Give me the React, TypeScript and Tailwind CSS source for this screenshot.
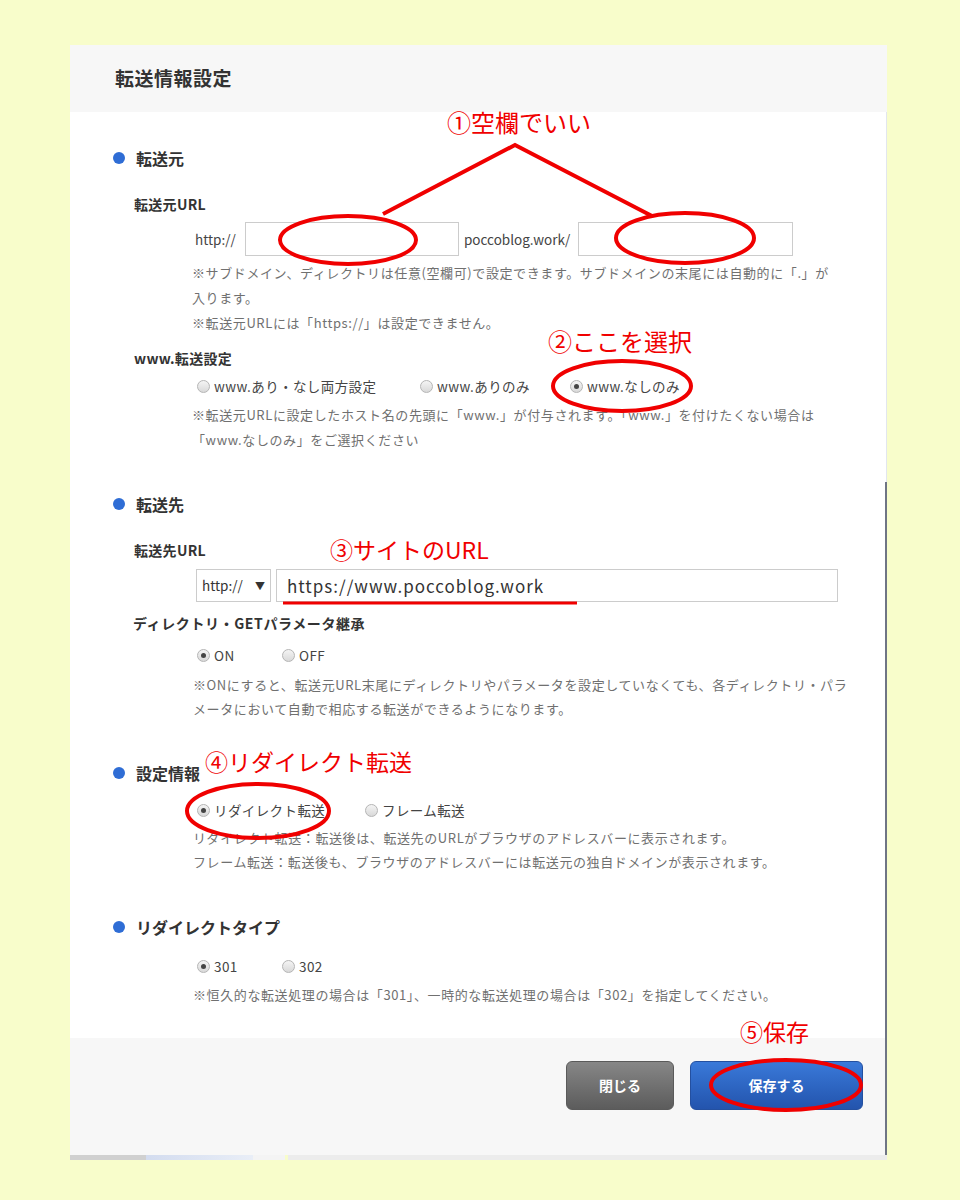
import React from "react";

const jp = { fontFamily: '"Noto Sans CJK JP", "Noto Sans", sans-serif' };

function Radio({ checked, label, className = "" }: { checked?: boolean; label: string; className?: string }) {
  return (
    <span className={`inline-flex items-center gap-[4px] ${className}`}>
      <span className="w-[13px] h-[13px] rounded-full border border-[#b5b5b5] bg-gradient-to-b from-[#f4f4f4] to-[#d9d9d9] flex items-center justify-center">
        {checked && <span className="w-[5px] h-[5px] rounded-full bg-[#444]" />}
      </span>
      <span className="text-[13.5px] tracking-[0.4px] text-[#444]">{label}</span>
    </span>
  );
}

function Heading({ children, className = "" }: { children: React.ReactNode; className?: string }) {
  return (
    <div className={`flex items-center gap-[11px] h-[20px] ${className}`}>
      <span className="w-[12px] h-[12px] rounded-full bg-[#2f6dd5]" />
      <span className="text-[16px] font-bold text-[#333]">{children}</span>
    </div>
  );
}

function Label({ children, className = "" }: { children: React.ReactNode; className?: string }) {
  return (
    <div className={`ml-[21px] h-[20px] leading-[20px] text-[14px] tracking-[0.3px] font-bold text-[#333] ${className}`}>
      {children}
    </div>
  );
}

function Note({ lines, lh, className = "" }: { lines: string[]; lh: string; className?: string }) {
  return (
    <div className={`text-[13px] tracking-[0.6px] text-[#707070] ${lh} ${className}`}>
      {lines.map((l) => (
        <div key={l}>{l}</div>
      ))}
    </div>
  );
}

export default function App() {
  return (
    <div className="relative w-[960px] h-[1200px] bg-[#f8fdcb] pt-[45px] pl-[70px]" style={jp}>
      <div className="w-[817px]">
        {/* header */}
        <div className="h-[67px] bg-[#f7f7f7] flex items-center pl-[45px]">
          <h1 className="text-[19px] tracking-[0.5px] font-bold text-[#333]">転送情報設定</h1>
        </div>

        {/* 転送元 */}
        <div className="bg-white pl-[43px] pt-[36px] h-[370px] border-r border-[#e2e6ee]">
          <Heading>転送元</Heading>
          <Label className="mt-[26px]">転送元URL</Label>
          <div className="mt-[8px] ml-[82px] flex items-center text-[13.5px] text-[#444]">
            <span className="w-[50px]">http://</span>
            <span className="w-[214px] h-[34px] border border-[#ccc] bg-white" />
            <span className="ml-[5px] w-[114px]">poccoblog.work/</span>
            <span className="w-[215px] h-[34px] border border-[#ccc] bg-white" />
          </div>
          <Note
            className="ml-[79px] mt-[4px]"
            lh="leading-[25px]"
            lines={[
              "※サブドメイン、ディレクトリは任意(空欄可)で設定できます。サブドメインの末尾には自動的に「.」が",
              "入ります。",
              "※転送元URLには「https://」は設定できません。",
            ]}
          />
          <Label className="mt-[13px]">www.転送設定</Label>
          <div className="mt-[8px] ml-[84px] flex items-center h-[20px]">
            <Radio label="www.あり・なし両方設定" className="w-[223px]" />
            <Radio label="www.ありのみ" className="w-[150px]" />
            <Radio checked label="www.なしのみ" />
          </div>
          <Note
            className="ml-[79px] mt-[6px]"
            lh="leading-[25px]"
            lines={[
              "※転送元URLに設定したホスト名の先頭に「www.」が付与されます。「www.」を付けたくない場合は",
              "「www.なしのみ」をご選択ください",
            ]}
          />
        </div>

        <div className="border-r-2 border-[#6f7585]">
          {/* 転送先 */}
          <div className="bg-white pl-[43px] pt-[12px]">
            <Heading>転送先</Heading>
            <Label className="mt-[26px]">転送先URL</Label>
            <div className="mt-[9px] ml-[83px] flex items-center gap-[5px]">
              <div className="w-[75px] h-[33px] border border-[#ccc] bg-white flex items-center justify-between px-[5px] text-[13.5px] text-[#333]">
                <span>http://</span>
                <span className="text-[10px]">▼</span>
              </div>
              <div className="w-[562px] h-[33px] border border-[#ccc] bg-white flex items-center pl-[10px] text-[17px] text-[#333] tracking-[1px]">
                https://www.poccoblog.work
              </div>
            </div>
            <div className="ml-[20px] mt-[11px] h-[20px] leading-[20px] text-[14px] tracking-[0.6px] font-bold text-[#333]">
              ディレクトリ・GETパラメータ継承
            </div>
            <div className="mt-[12px] ml-[84px] flex items-center h-[20px]">
              <Radio checked label="ON" className="w-[85px]" />
              <Radio label="OFF" />
            </div>
            <Note
              className="ml-[80px] mt-[8px]"
              lh="leading-[24px]"
              lines={[
                "※ONにすると、転送元URL末尾にディレクトリやパラメータを設定していなくても、各ディレクトリ・パラ",
                "メータにおいて自動で相応する転送ができるようになります。",
              ]}
            />

            {/* 設定情報 */}
            <Heading className="mt-[42px]">設定情報</Heading>
            <div className="mt-[17px] ml-[84px] flex items-center h-[20px]">
              <Radio checked label="リダイレクト転送" className="w-[168px]" />
              <Radio label="フレーム転送" />
            </div>
            <Note
              className="ml-[80px] mt-[6px]"
              lh="leading-[24px]"
              lines={[
                "リダイレクト転送：転送後は、転送先のURLがブラウザのアドレスバーに表示されます。",
                "フレーム転送：転送後も、ブラウザのアドレスバーには転送元の独自ドメインが表示されます。",
              ]}
            />

            {/* リダイレクトタイプ */}
            <Heading className="mt-[43px]">リダイレクトタイプ</Heading>
            <div className="mt-[19px] ml-[84px] flex items-center h-[20px]">
              <Radio checked label="301" className="w-[85px]" />
              <Radio label="302" />
            </div>
            <Note
              className="ml-[80px] mt-[7px] pb-[31px]"
              lh="leading-[24px]"
              lines={["※恒久的な転送処理の場合は「301」、一時的な転送処理の場合は「302」を指定してください。"]}
            />
          </div>

          {/* footer */}
          <div className="h-[117px] bg-[#f7f7f7] flex justify-end items-start pt-[23px] pr-[22px] gap-[16px]">
            <button className="w-[108px] h-[49px] rounded-[6px] border border-[#5a5a5a] bg-gradient-to-b from-[#878787] to-[#5c5c5c] text-white text-[14px] font-bold">
              閉じる
            </button>
            <button className="w-[173px] h-[49px] rounded-[6px] border border-[#2450a0] bg-gradient-to-b from-[#3a79d9] to-[#2354ad] text-white text-[14px] font-bold">
              保存する
            </button>
          </div>
        </div>
        <div className="flex h-[5px]">
          <div className="w-[76px] bg-[#d0d0d0]" />
          <div className="w-[107px] bg-gradient-to-r from-[#d3dcef] to-[#e9eef7]" />
          <div className="w-[32px] bg-[#f4f4f4]" />
          <div className="flex-1 bg-[#ececec] ml-[3px]" />
        </div>
      </div>

      {/* annotations */}
      <svg className="absolute inset-0 pointer-events-none" width="960" height="1200" viewBox="0 0 960 1200" fill="none" stroke="#f00000" strokeWidth="4">
        <path d="M383 214 L515 145 L652 216" />
        <ellipse cx="348" cy="240" rx="68" ry="24" />
        <ellipse cx="685" cy="238" rx="69" ry="25" />
        <ellipse cx="622" cy="386" rx="69" ry="25" />
        <path d="M283 603 L577 603" strokeWidth="3" />
        <ellipse cx="258" cy="811" rx="71" ry="27" />
        <ellipse cx="786" cy="1085" rx="75" ry="25" />
      </svg>
      <div className="absolute left-[447px] top-[106px] text-[24px] leading-[32px] text-[#f00000]">①空欄でいい</div>
      <div className="absolute left-[548px] top-[325px] text-[24px] leading-[32px] text-[#f00000]">②ここを選択</div>
      <div className="absolute left-[330px] top-[533px] text-[23px] leading-[32px] text-[#f00000]">③サイトのURL</div>
      <div className="absolute left-[205px] top-[745px] text-[23px] leading-[32px] text-[#f00000]">④リダイレクト転送</div>
      <div className="absolute left-[740px] top-[1015px] text-[23px] leading-[32px] text-[#f00000]">⑤保存</div>
    </div>
  );
}
